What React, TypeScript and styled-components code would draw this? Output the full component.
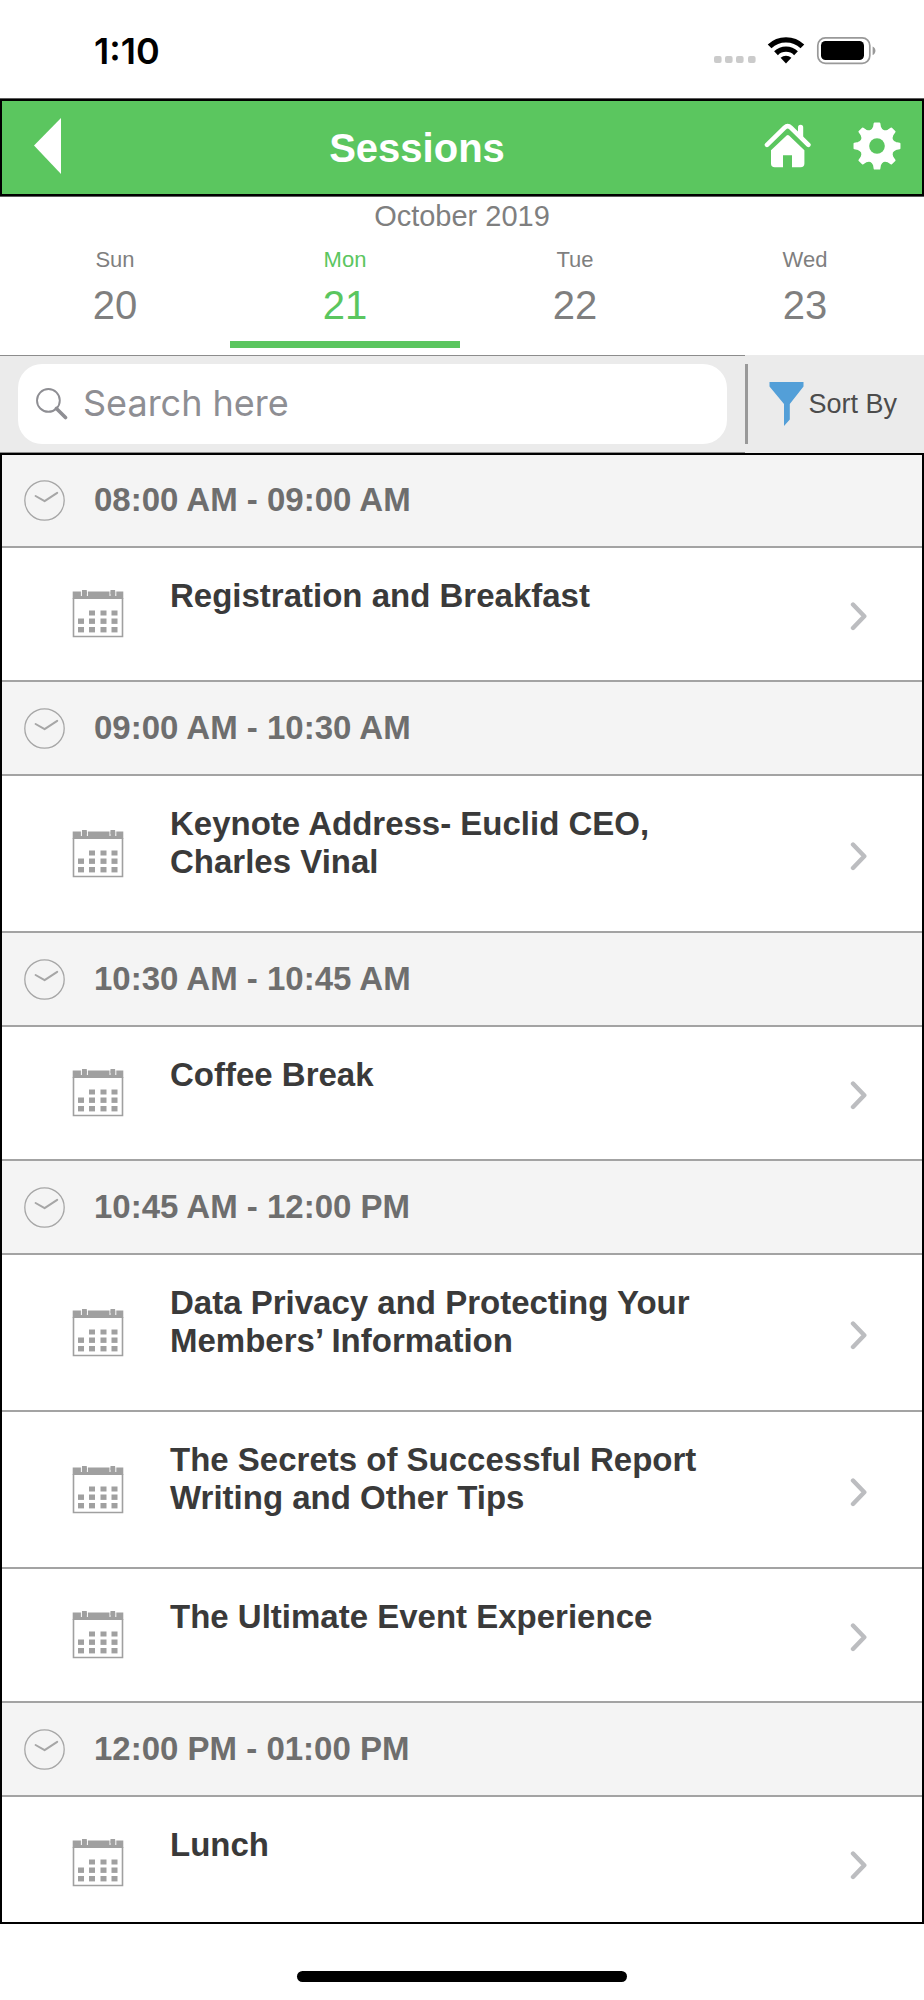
import React, { useState } from "react";
import styled, { createGlobalStyle } from "styled-components";

const GREEN = "#5bc65f";
const LINE = "#a3a3a3";

const GlobalStyle = createGlobalStyle`
  *, *::before, *::after { box-sizing: border-box; }
  body {
    margin: 0;
    background: #fff;
    font-family: "Liberation Sans", Arial, Helvetica, sans-serif;
  }
  button, input { font-family: inherit; margin: 0; border: 0; }
  button { padding: 0; background: none; cursor: pointer; }
  svg { display: block; flex: none; }
`;

const Screen = styled.div`
  display: flex;
  flex-direction: column;
  min-height: 100vh;
`;

const StatusBar = styled.div`
  display: flex;
  align-items: center;
  justify-content: space-between;
  height: 99px;
  padding: 2px 48px 0 94px;
`;

const Clock = styled.time`
  font: 600 36px/40px Inter, sans-serif;
  color: #000;
`;

const Header = styled.header`
  display: flex;
  align-items: center;
  height: 97px;
  padding-right: 21px;
  background: ${GREEN};
  border: 2px solid #000;
  box-shadow: 0 0 0 1px #5c5c5c;
`;

const BackButton = styled.button`
  display: flex;
  align-items: center;
  width: 68px;
  height: 88px;
  padding: 0 0 4px 32px;
`;

const Title = styled.h1`
  flex: 1;
  margin: 0;
  font-size: 40px;
  line-height: 46px;
  font-weight: 700;
  text-align: center;
  color: #fff;
`;

const HeaderActions = styled.div`
  display: flex;
  gap: 41px;
  padding-bottom: 4px;
`;

const Calendar = styled.section`
  padding-top: 3px;
  color: #7f7f7f;
`;

const Month = styled.h2`
  margin: 0;
  font-size: 29px;
  line-height: 34px;
  font-weight: 400;
  text-align: center;
`;

const Days = styled.div`
  display: grid;
  grid-template-columns: repeat(4, 1fr);
  padding-right: 4px;
`;

const Day = styled.button<{ $active: boolean }>`
  display: flex;
  flex-direction: column;
  align-items: center;
  gap: 9px;
  padding: 14px 0 7px;
  color: ${(p) => (p.$active ? GREEN : "#7f7f7f")};

  &::after {
    content: "";
    width: 100%;
    height: 7px;
    margin-top: 4px;
    background: ${(p) => (p.$active ? GREEN : "transparent")};
  }
`;

const DayName = styled.span`
  font-size: 22px;
  line-height: 26px;
`;

const DayNumber = styled.span`
  font-size: 40px;
  line-height: 46px;
`;

const Toolbar = styled.div`
  display: flex;
  background: #ebebeb;
`;

const SearchArea = styled.form`
  flex: 1;
  padding: 8px 18px;
  border: solid #8c8c8c;
  border-width: 1px 0;
`;

const SearchBox = styled.label`
  display: flex;
  align-items: center;
  gap: 15px;
  height: 80px;
  padding: 0 18px;
  border-radius: 24px;
  background: #fff;
`;

const SearchInput = styled.input`
  flex: 1;
  min-width: 0;
  padding: 0 0 2px;
  font: 400 36px/46px Inter, sans-serif;
  color: #3a3a3a;
  background: transparent;
  outline: none;

  &::placeholder { color: #8e8e93; opacity: 1; }
`;

const SortButton = styled.button`
  display: flex;
  align-items: center;
  align-self: center;
  gap: 4px;
  height: 80px;
  padding: 0 27px 0 21px;
  border-left: 3px solid #999;
  font-size: 27px;
  line-height: 32px;
  color: #4c4c4c;
`;

const Agenda = styled.main`
  position: relative;
  overflow: hidden;
  padding-top: 1px;

  /* frame lies over the edges of the rows */
  &::after {
    content: "";
    position: absolute;
    inset: 0;
    border: 2px solid #000;
    pointer-events: none;
  }
`;

const TimeHeading = styled.h3`
  display: flex;
  align-items: center;
  gap: 29px;
  height: 94px;
  margin: 0;
  padding-left: 24px;
  border-bottom: 2px solid ${LINE};
  background: #f4f4f4;
  font-size: 33px;
  line-height: 38px;
  font-weight: 700;
  color: #6e6e6e;
`;

const SessionList = styled.ul`
  margin: 0;
  padding: 0;
  list-style: none;

  /* the frame cuts the last row a little short */
  section:last-of-type > & { margin-bottom: -7px; }
`;

const SessionLink = styled.a`
  display: flex;
  align-items: center;
  min-height: 134px;
  padding: 0 56px 0 72px;
  border-bottom: 2px solid ${LINE};
  background: #fff;
  color: #3a3a3a;
  text-decoration: none;
`;

const SessionTitle = styled.span`
  flex: 1;
  align-self: flex-start;
  padding: 29px 100px 50px 46px;
  font-size: 33px;
  line-height: 38px;
  font-weight: 700;
`;

const HomeArea = styled.footer`
  display: flex;
  justify-content: center;
  padding: 47px 0 18px;
`;

const HomeIndicator = styled.div`
  width: 36%;
  max-width: 330px;
  height: 11px;
  border-radius: 6px;
  background: #000;
`;

const StatusIcons = () => (
  <svg width="164" height="30" viewBox="0 0 164 30" role="img" aria-label="Wi-Fi on, battery full">
    {[0, 11, 22, 34].map((x) => (
      <rect key={x} x={x + 2} y="20" width="7.6" height="7" rx="2" fill="#cbcbcb" />
    ))}
    <g fill="none" stroke="#000" strokeWidth="5.4">
      <path d="M57.6 10.4a23.8 23.8 0 0 1 32.8 0" />
      <path d="M64 17.2a14.4 14.4 0 0 1 20 0" />
    </g>
    <path d="M74 27.4l-5.4-5.6a8 8 0 0 1 10.8 0z" />
    <rect x="105.8" y="1.8" width="52" height="25.6" rx="7.6" fill="none" stroke="#999" strokeWidth="1.7" />
    <rect x="109" y="5" width="43" height="19" rx="4.6" />
    <path d="M160.6 10.4c3.8 1.2 3.8 7.4 0 8.6z" fill="#999" />
  </svg>
);

const BackIcon = () => (
  <svg width="27" height="56" viewBox="0 0 27 56" aria-hidden="true">
    <path d="M27 0v56L0 27.6z" fill="#fff" />
  </svg>
);

const HomeIcon = () => (
  <svg width="48" height="48" viewBox="0 0 48 48" fill="#fff" aria-hidden="true">
    <path
      d="M3 22.8L20.6 5.6Q23.7 2.6 26.8 5.6L44.4 22.8"
      fill="none"
      stroke="#fff"
      strokeWidth="4.6"
      strokeLinecap="round"
    />
    <path d="M34 11V5.4a2.6 2.6 0 0 1 5.2 0V16z" />
    <path d="M22.6 13.5q1.2-1 2.4 0L40.4 28.2V41.5a3.8 3.8 0 0 1-3.8 3.8H28V33.3H19V45.3H10.8A3.8 3.8 0 0 1 7 41.5V28.2z" />
  </svg>
);

const polar = (radius: number, degrees: number) => {
  const a = (degrees * Math.PI) / 180;
  return `${(24 + radius * Math.sin(a)).toFixed(2)} ${(24 - radius * Math.cos(a)).toFixed(2)}`;
};

const gearOutline = Array.from({ length: 8 }, (_, i) => {
  const t = i * 45;
  return `${i ? "L" : "M"}${polar(19, t - 9)}L${polar(22.6, t - 6)}L${polar(22.6, t + 6)}L${polar(
    19,
    t + 9
  )}Q${polar(14, t + 22.5)} ${polar(19, t + 36)}`;
}).join("");

const GearIcon = () => (
  <svg width="48" height="48" viewBox="0 0 48 48" aria-hidden="true">
    <path d={gearOutline + "Z"} fill="#fff" stroke="#fff" strokeWidth="2" strokeLinejoin="round" />
    <circle cx="24" cy="24" r="7.8" fill={GREEN} />
  </svg>
);

const SearchIcon = () => (
  <svg width="32" height="32" viewBox="0 0 32 32" fill="none" stroke="#8e8e93" aria-hidden="true">
    <circle cx="12.4" cy="12.4" r="11.4" strokeWidth="1.9" />
    <path d="M20.4 20.4L29.5 29.5" strokeWidth="3.6" strokeLinecap="round" />
  </svg>
);

const FunnelIcon = () => (
  <svg width="35" height="44" viewBox="0 0 35 44" aria-hidden="true">
    <path d="M.5 0h34v4.6L20.8 22v15.4L15 44V22L.5 4.6z" fill="#539fd8" />
  </svg>
);

const ClockIcon = () => (
  <svg width="41" height="41" viewBox="0 0 41 41" fill="none" stroke="#a6a6a6" aria-hidden="true">
    <circle cx="20.5" cy="20.5" r="19.7" strokeWidth="1.3" />
    <path d="M11.6 16l9 5.200 12.600-8.400" strokeWidth="2" strokeLinecap="round" strokeLinejoin="round" />
  </svg>
);

const CalendarIcon = () => (
  <svg width="52" height="48" viewBox="0 0 52 48" fill="#a0a0a0" aria-hidden="true">
    <path d="M1.5 8V46.5H50.500V8" fill="none" stroke="#a0a0a0" strokeWidth="1.6" />
    <path d="M.7 1.5H51.3V9H.7z" />
    <path d="M9.400 1v5M15.400 1v5M38 1v5M43.800 1v5" stroke="#fff" strokeWidth="1" />
    <path d="M10 0h4.800v4H10zM38.500 0h4.600v4h-4.600z" />
    {[17.5, 29, 40].map((x) => (
      <rect key={x} x={x - 0.5} y="20.5" width="6" height="5" />
    ))}
    {[28.5, 37].map((y) =>
      [6.5, 17.5, 29, 40].map((x) => <rect key={`${x}-${y}`} x={x - 0.5} y={y} width="6" height="5.4" />)
    )}
  </svg>
);

const ChevronIcon = () => (
  <svg width="18" height="34" viewBox="0 0 18 34" fill="none" aria-hidden="true">
    <path d="M3 7.5L14.3 19.3 3 31" stroke="#bcbdc0" strokeWidth="4.4" strokeLinecap="round" strokeLinejoin="round" />
  </svg>
);

const days = [
  { name: "Sun", number: 20 },
  { name: "Mon", number: 21 },
  { name: "Tue", number: 22 },
  { name: "Wed", number: 23 },
];

const slots = [
  { time: "08:00 AM - 09:00 AM", sessions: ["Registration and Breakfast"] },
  { time: "09:00 AM - 10:30 AM", sessions: ["Keynote Address- Euclid CEO, Charles Vinal"] },
  { time: "10:30 AM - 10:45 AM", sessions: ["Coffee Break"] },
  {
    time: "10:45 AM - 12:00 PM",
    sessions: [
      "Data Privacy and Protecting Your Members’ Information",
      "The Secrets of Successful Report Writing and Other Tips",
      "The Ultimate Event Experience",
    ],
  },
  { time: "12:00 PM - 01:00 PM", sessions: ["Lunch"] },
];

export default function App() {
  const [selected, setSelected] = useState(21);
  const [query, setQuery] = useState("");

  return (
    <Screen>
      <GlobalStyle />
      <StatusBar>
        <Clock>1:10</Clock>
        <StatusIcons />
      </StatusBar>

      <Header>
        <BackButton type="button" aria-label="Back">
          <BackIcon />
        </BackButton>
        <Title>Sessions</Title>
        <HeaderActions>
          <button type="button" aria-label="Home">
            <HomeIcon />
          </button>
          <button type="button" aria-label="Settings">
            <GearIcon />
          </button>
        </HeaderActions>
      </Header>

      <Calendar>
        <Month>October 2019</Month>
        <Days>
          {days.map((day) => (
            <Day
              key={day.number}
              type="button"
              $active={day.number === selected}
              aria-pressed={day.number === selected}
              onClick={() => setSelected(day.number)}
            >
              <DayName>{day.name}</DayName>
              <DayNumber>{day.number}</DayNumber>
            </Day>
          ))}
        </Days>
      </Calendar>

      <Toolbar>
        <SearchArea role="search" onSubmit={(e) => e.preventDefault()}>
          <SearchBox>
            <SearchIcon />
            <SearchInput
              type="text"
              aria-label="Search sessions"
              placeholder="Search here"
              value={query}
              onChange={(e) => setQuery(e.target.value)}
            />
          </SearchBox>
        </SearchArea>
        <SortButton type="button">
          <FunnelIcon />
          Sort By
        </SortButton>
      </Toolbar>

      <Agenda>
        {slots.map((slot) => (
          <section key={slot.time}>
            <TimeHeading>
              <ClockIcon />
              {slot.time}
            </TimeHeading>
            <SessionList>
              {slot.sessions.map((session) => (
                <li key={session}>
                  <SessionLink href="#">
                    <CalendarIcon />
                    <SessionTitle>{session}</SessionTitle>
                    <ChevronIcon />
                  </SessionLink>
                </li>
              ))}
            </SessionList>
          </section>
        ))}
      </Agenda>

      <HomeArea>
        <HomeIndicator />
      </HomeArea>
    </Screen>
  );
}
